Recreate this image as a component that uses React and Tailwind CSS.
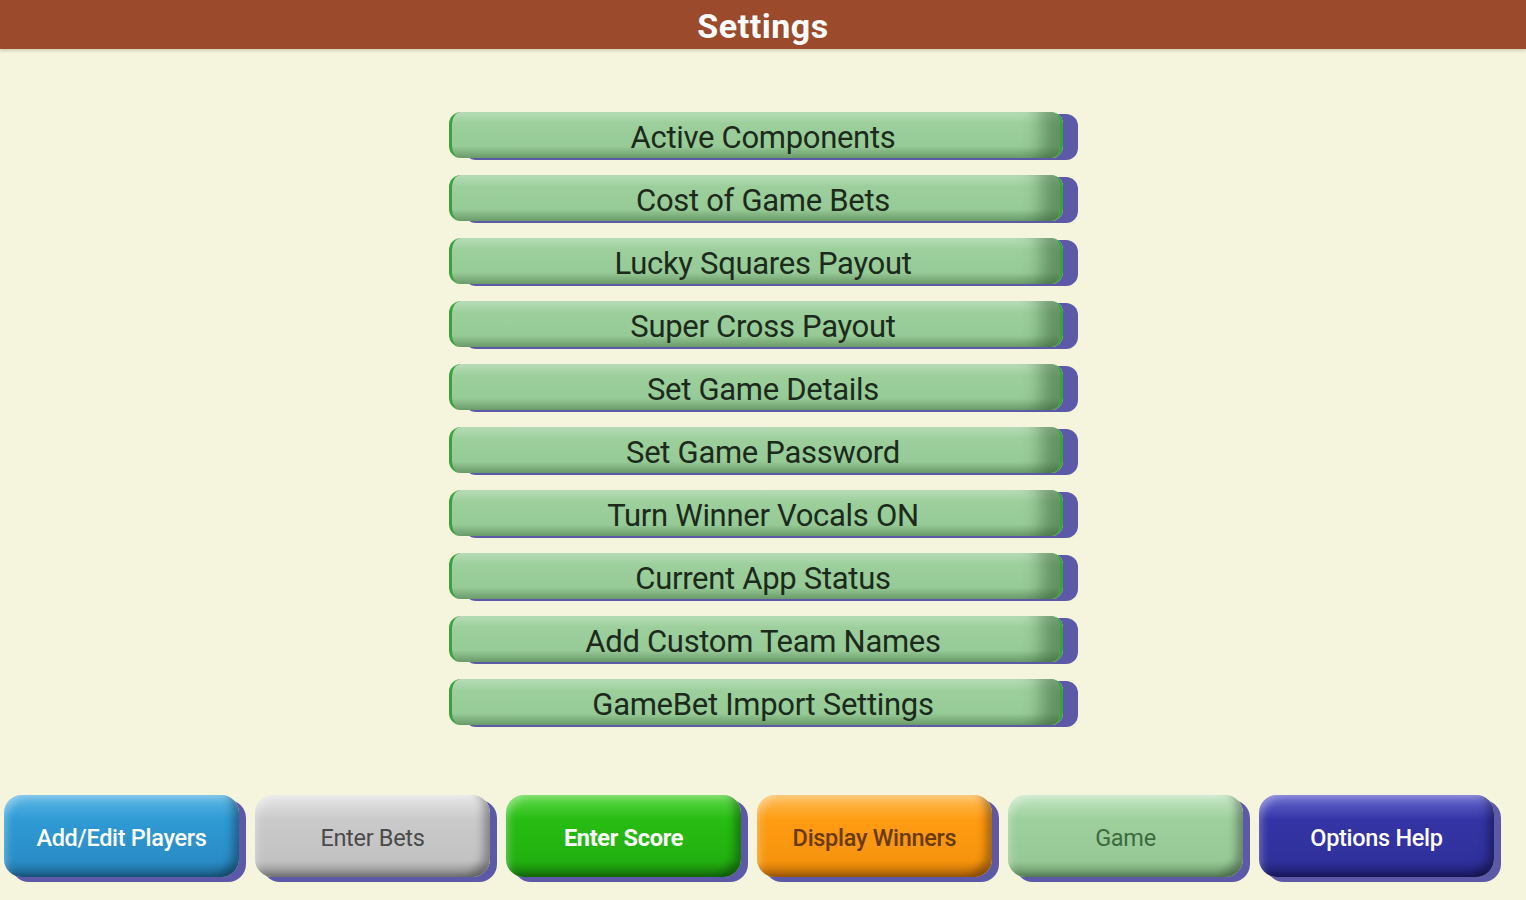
import React from "react";

const settings = [
  "Active Components",
  "Cost of Game Bets",
  "Lucky Squares Payout",
  "Super Cross Payout",
  "Set Game Details",
  "Set Game Password",
  "Turn Winner Vocals ON",
  "Current App Status",
  "Add Custom Team Names",
  "GameBet Import Settings",
];

const bottom = [
  { label: "Add/Edit Players", cls: "bg-[linear-gradient(180deg,#5fb8e6_0%,#2f9ad4_30%,#2a8cc6_80%,#1c6a9a_100%)] text-white font-medium" },
  { label: "Enter Bets", cls: "bg-[linear-gradient(180deg,#e6e6e6_0%,#cacaca_30%,#c2c2c2_80%,#8e8e8e_100%)] text-[#4a4a4a] font-normal" },
  { label: "Enter Score", cls: "bg-[linear-gradient(180deg,#5fd84a_0%,#27bd12_30%,#22b010_80%,#17800a_100%)] text-white font-bold" },
  { label: "Display Winners", cls: "bg-[linear-gradient(180deg,#ffbe5a_0%,#ff9c12_30%,#f7940e_80%,#c06c06_100%)] text-[#6a3a00] font-medium" },
  { label: "Game", cls: "bg-[linear-gradient(180deg,#c3e6c3_0%,#9dd09d_30%,#97c997_80%,#6a9c6a_100%)] text-[#3d6b3d] font-normal" },
  { label: "Options Help", cls: "bg-[linear-gradient(180deg,#6a6ad0_0%,#3434a6_30%,#30309c_80%,#1e1e70_100%)] text-white font-medium" },
];

export default function App() {
  return (
    <div className="w-[1526px] h-[900px] bg-[#f5f4dd] flex flex-col overflow-hidden font-['Roboto',sans-serif]">
      <div className="h-[49px] bg-[#9b4a2c] flex items-center justify-center shadow-[0_2px_3px_rgba(0,0,0,0.15)]">
        <span className="text-white text-[34px] font-bold tracking-[0.5px] mt-[4px]">Settings</span>
      </div>

      <div className="flex flex-col items-center pt-[63px] gap-[17px] pr-[15px]">
        {settings.map((s) => (
          <div
            key={s}
            className="w-[614px] h-[46px] pl-[15px] rounded-[12px] border-l-[3px] border-r-[3px] border-[#3aa23a] bg-[linear-gradient(180deg,#bfe3bf_0%,#9ccf9c_25%,#96ca96_75%,#6f9f6f_100%)] shadow-[inset_-28px_0_18px_-10px_rgba(30,70,30,0.45),15px_2px_0_#5c5aa8] flex items-center justify-center text-[31px] tracking-[-0.3px] text-[#1c2a1c] pt-[6px]"
          >
            {s}
          </div>
        ))}
      </div>

      <div className="mt-auto mb-[23px] flex gap-[16px] pl-[4px]">
        {bottom.map((b) => (
          <div
            key={b.label}
            className={`w-[235px] h-[82px] pt-[5px] rounded-[18px] flex items-center justify-center text-[23.5px] tracking-[-0.3px] shadow-[inset_-10px_-6px_10px_-4px_rgba(0,0,0,0.35),inset_6px_6px_8px_-4px_rgba(255,255,255,0.35),7px_5px_0_#5c5aa8] ${b.cls}`}
          >
            {b.label}
          </div>
        ))}
      </div>
    </div>
  );
}
